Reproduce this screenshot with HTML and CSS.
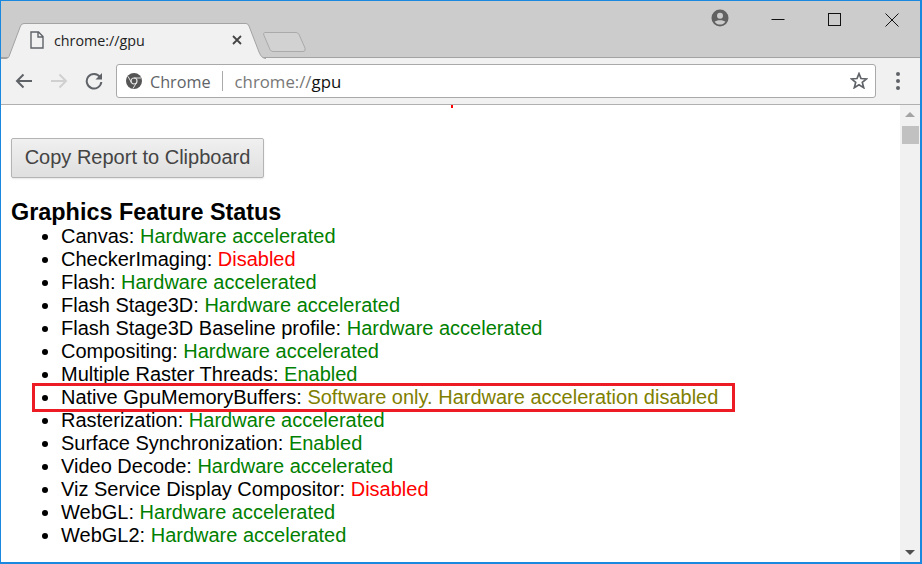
FILE: index.html
```html
<!DOCTYPE html>
<html>
<head>
    <meta name="viewport" content="width=device-width, initial-scale=1">
    <link rel="stylesheet" href="styles.css">
</head>
<body>

<div class="window">

    <!-- tabs and window buttons -->
    <div class="tabstrip">
        <div class="tab">
            <svg class="tab-shape" width="264" height="36" viewBox="0 0 264 36">
                <path d="M0 35.5 L5 35.5 Q7 35.5 8 33.5 L19.5 3 Q20.5 0.5 23 0.5 L245 0.5 Q247 0.5 248 3 L258 29 Q260.5 35.5 265 35.5" fill="#f1f1f1" stroke="#a3a3a3"/>
            </svg>
            <svg class="tab-file" width="14" height="18" viewBox="0 0 14 18">
                <path d="M1 1 H8.5 L13 5.5 V17 H1 Z M8 1 V6 H13" fill="none" stroke="#5f6368" stroke-width="1.4"/>
            </svg>
            <span class="tab-title">chrome://gpu</span>
            <svg class="tab-close" width="10" height="10" viewBox="0 0 10 10">
                <path d="M1 1 L9 9 M9 1 L1 9" stroke="#444" stroke-width="1.8"/>
            </svg>
        </div>
        <svg class="newtab" width="44" height="22" viewBox="0 0 44 22">
            <path d="M1.5 1.5 H33 Q35 1.5 36 3.5 L42 17 Q43 20.5 40 20.5 H10 Q8 20.5 7 18.5 L0.8 4 Q0.3 1.5 1.5 1.5 Z" fill="#d2d2d2" stroke="#aaa"/>
        </svg>
        <div class="winbtns">
            <svg class="profile" width="18" height="18" viewBox="0 0 18 18">
                <circle cx="9" cy="9" r="8.5" fill="#616161"/>
                <circle cx="9" cy="6.8" r="3" fill="#ccc"/>
                <path d="M3.6 12.8 C5 10.6 13 10.6 14.4 12.8 C13 14.8 11 15.6 9 15.6 C7 15.6 5 14.8 3.6 12.8 Z" fill="#ccc"/>
            </svg>
            <svg class="winbtn" width="14" height="14" viewBox="0 0 14 14"><path d="M0.5 6.5 H13.5" stroke="#111"/></svg>
            <svg class="winbtn" width="14" height="14" viewBox="0 0 14 14"><rect x="0.5" y="0.5" width="12" height="12" fill="none" stroke="#111"/></svg>
            <svg class="winbtn" width="14" height="14" viewBox="0 0 14 14"><path d="M0.5 0.5 L13.5 13.5 M13.5 0.5 L0.5 13.5" stroke="#111"/></svg>
        </div>
    </div>

    <!-- back / forward / reload and the omnibox -->
    <div class="toolbar">
        <svg class="navbtn" width="18" height="16" viewBox="0 0 18 16">
            <path d="M17 8 H2 M8.5 1.5 L2 8 L8.5 14.5" fill="none" stroke="#5f6368" stroke-width="2"/>
        </svg>
        <svg class="navbtn" width="18" height="16" viewBox="0 0 18 16">
            <path d="M1 8 H16 M9.5 1.5 L16 8 L9.5 14.5" fill="none" stroke="#d0d0d0" stroke-width="2"/>
        </svg>
        <svg class="navbtn" width="18" height="18" viewBox="0 0 18 18">
            <path d="M15 5 A7.3 7.3 0 1 0 16.3 10" fill="none" stroke="#5f6368" stroke-width="2"/>
            <path d="M17 1 V7.5 H10.5 Z" fill="#5f6368"/>
        </svg>
        <div class="omnibox">
            <svg class="chrome-icon" width="16" height="16" viewBox="0 0 16 16">
                <circle cx="8" cy="8" r="8" fill="#555"/>
                <circle cx="8" cy="8" r="3" fill="#555" stroke="#e4e4e4" stroke-width="1.2"/>
                <path d="M8 5 H15 M5.4 9.5 L2 3.4 M10.6 9.5 L7 15.5" stroke="#e4e4e4" stroke-width="1"/>
            </svg>
            <span class="chip">Chrome</span>
            <span class="sep"></span>
            <span class="url"><span class="url-dim">chrome://</span>gpu</span>
            <svg class="star" width="18" height="17" viewBox="0 0 18 17">
                <path d="M9 1.6 L11 6.5 L16.6 6.9 L12.3 10.4 L13.7 15.7 L9 12.8 L4.3 15.7 L5.7 10.4 L1.4 6.9 L7 6.5 Z" fill="none" stroke="#5f6368" stroke-width="1.7"/>
            </svg>
        </div>
        <div class="menu"><i></i><i></i><i></i></div>
    </div>

    <div class="viewport">
        <div class="page">
            <span class="cut-mark"></span>
            <button class="copy-btn">Copy Report to Clipboard</button>
            <h3>Graphics Feature Status</h3>
            <ul>
                <li>Canvas: <span class="on">Hardware accelerated</span></li>
                <li>CheckerImaging: <span class="off">Disabled</span></li>
                <li>Flash: <span class="on">Hardware accelerated</span></li>
                <li>Flash Stage3D: <span class="on">Hardware accelerated</span></li>
                <li>Flash Stage3D Baseline profile: <span class="on">Hardware accelerated</span></li>
                <li>Compositing: <span class="on">Hardware accelerated</span></li>
                <li>Multiple Raster Threads: <span class="on">Enabled</span></li>
                <li class="marked">Native GpuMemoryBuffers: <span class="soft">Software only. Hardware acceleration disabled</span></li>
                <li>Rasterization: <span class="on">Hardware accelerated</span></li>
                <li>Surface Synchronization: <span class="on">Enabled</span></li>
                <li>Video Decode: <span class="on">Hardware accelerated</span></li>
                <li>Viz Service Display Compositor: <span class="off">Disabled</span></li>
                <li>WebGL: <span class="on">Hardware accelerated</span></li>
                <li>WebGL2: <span class="on">Hardware accelerated</span></li>
            </ul>
        </div>
        <div class="scrollbar">
            <span class="arrow-up"></span>
            <span class="thumb"></span>
            <span class="arrow-down"></span>
        </div>
    </div>

</div>

</body>
</html>
```

FILE: styles.css
```css
* {box-sizing: border-box}

html, body {
    margin: 0;
    height: 100%;
    overflow: hidden;
}

.window {
    display: flex;
    flex-direction: column;
    width: 922px;
    height: 564px;
    border: 1px solid #1a88de;
    border-right-width: 2px;
    border-bottom-width: 2px;
    background-color: #fff;
    font-family: "Liberation Sans", Arial, sans-serif;
}

/* Tab strip */
.tabstrip {
    display: flex;
    align-items: flex-start;
    height: 57px;
    flex-shrink: 0;
    background-color: #ccc;
    border-bottom: 1px solid #a3a3a3;
}

.tab {
    position: relative;
    display: flex;
    align-items: center;
    width: 256px;
    height: 35px;
    margin-top: 22px;
    padding: 0 0 1px 29px;
    z-index: 1;
}

.tab-shape {
    position: absolute;
    left: 0;
    top: 0;
    overflow: visible;
}

.tab-file, .tab-title, .tab-close {
    position: relative;
}

.tab-title {
    margin-left: 10px;
    font-family: "Open Sans", sans-serif;
    font-size: 14.3px;
    color: #222;
    white-space: nowrap;
}

.tab-close {
    margin-left: auto;
    margin-right: 15px;
}

.newtab {
    margin-top: 30px;
    margin-left: 6px;
}

.winbtns {
    display: flex;
    align-items: flex-start;
    margin-left: auto;
    padding-top: 8px;
    padding-right: 21px;
}

.profile {
    margin-right: 42px;
}

.winbtn {
    margin-top: 4px;
}

.winbtn + .winbtn {
    margin-left: 43px;
}

/* Toolbar */
.toolbar {
    display: flex;
    align-items: center;
    height: 47px;
    flex-shrink: 0;
    padding: 0 0 1px 14px;
    background-color: #f1f1f1;
    border-bottom: 1px solid #b0b0b0;
}

.navbtn {
    margin-right: 17px;
}

.omnibox {
    display: flex;
    align-items: center;
    width: 760px;
    height: 34px;
    margin-left: -4px;
    padding: 0 7px 0 9px;
    background-color: #fff;
    border: 1px solid #a9a9a9;
    border-radius: 3px;
    font-family: "Open Sans", sans-serif;
}

.chip {
    margin-left: 8px;
    padding-top: 2px;
    font-size: 16.2px;
    color: #5f6368;
}

.sep {
    width: 1px;
    height: 20px;
    margin: 0 12px 0 11px;
    background-color: #aaa;
}

.url {
    padding-top: 1px;
    font-size: 16.8px;
    color: #111;
}

.url-dim {
    color: #777;
}

.star {
    margin-left: auto;
}

.menu {
    display: flex;
    flex-direction: column;
    gap: 3px;
    margin-left: 20px;
}

.menu i {
    display: block;
    width: 4px;
    height: 4px;
    border-radius: 50%;
    background-color: #5f6368;
}

/* Page content */
.viewport {
    display: flex;
    flex: 1;
    min-height: 0;
}

.page {
    position: relative;
    flex: 1;
    overflow: hidden;
    padding: 33px 0 0 10px;
    color: #000;
    font-size: 20px;
}

.cut-mark {
    position: absolute;
    left: 450px;
    top: 0;
    width: 2px;
    height: 3px;
    background-color: #f00;
}

.copy-btn {
    display: block;
    width: 253px;
    height: 40px;
    padding: 0 0 2px;
    background: linear-gradient(#f0f0f0, #dfdfdf);
    border: 1px solid #b4b4b4;
    border-radius: 2px;
    box-shadow: 0 1px 2px rgba(0, 0, 0, 0.1);
    color: #444;
    font-family: inherit;
    font-size: 20px;
}

h3 {
    margin: 21px 0 0;
    font-size: 23.4px;
    line-height: 26px;
}

ul {
    margin: 0;
    padding-left: 50px;
}

li {
    line-height: 23px;
}

.marked {
    position: relative;
}

/* the red box drawn over the screenshot */
.marked::after {
    content: "";
    position: absolute;
    left: -29px;
    top: -3px;
    box-sizing: border-box;
    width: 703px;
    height: 29px;
    border: 3px solid #ed1c24;
}

.on {
    color: #008000;
}

.off {
    color: #f00;
}

.soft {
    color: #808000;
}

/* Scrollbar */
.scrollbar {
    position: relative;
    width: 20px;
    flex-shrink: 0;
    background-color: #f1f1f1;
}

.arrow-up, .arrow-down {
    position: absolute;
    left: 5px;
    width: 0;
    height: 0;
    border-left: 5px solid transparent;
    border-right: 5px solid transparent;
}

.arrow-up {
    top: 7px;
    border-bottom: 5px solid #a3a3a3;
}

.arrow-down {
    bottom: 7px;
    border-top: 5px solid #505050;
}

.thumb {
    position: absolute;
    left: 2px;
    top: 21px;
    width: 17px;
    height: 18px;
    background-color: #c1c1c1;
}
```
